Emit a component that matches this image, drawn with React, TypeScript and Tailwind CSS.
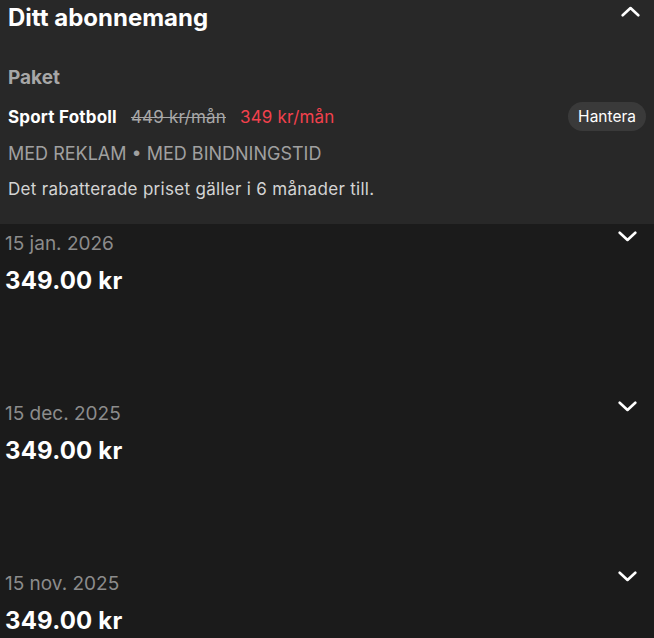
type Payment = {
    date: string
    amount: string
}

const payments: Payment[] = [
    { date: "15 jan. 2026", amount: "349.00 kr" },
    { date: "15 dec. 2025", amount: "349.00 kr" },
    { date: "15 nov. 2025", amount: "349.00 kr" },
]

function Chevron({ up = false }: { up?: boolean }) {
    return (
        <svg width="19" height="11" viewBox="0 0 19 11" fill="none" className={up ? "rotate-180" : ""}>
            <path d="M1.7 1.7 L9.5 9 L17.3 1.7" stroke="white" strokeWidth="2.6" strokeLinecap="round" strokeLinejoin="round" />
        </svg>
    )
}

function PaymentRow({ payment }: { payment: Payment }) {
    return (
        <div className="h-[170px] flex justify-between pl-[5px] pr-[17px] pt-[7px]">
            <div className="flex flex-col">
                <span className="text-[19px] leading-[26px] text-[#8c8c8c]">{payment.date}</span>
                <span className="text-[24px] leading-[32px] font-bold tracking-[0.2px] text-white mt-[8px]">{payment.amount}</span>
            </div>
            <div>
                <Chevron />
            </div>
        </div>
    )
}

export default function App() {
    return (
        <div className="w-[654px] h-[638px] overflow-hidden bg-[#1b1b1b] font-['Inter',sans-serif]">
            <div className="bg-[#282828] h-[224px] px-[8px] pt-[2px]">
                <div className="flex justify-between items-start">
                    <h1 className="text-[24px] leading-[32px] font-bold text-white">Ditt abonnemang</h1>
                    <div className="mt-[4px] mr-[6px]">
                        <Chevron up />
                    </div>
                </div>
                <div className="mt-[31px] text-[19px] leading-[26px] font-bold text-[#a7a7a7]">Paket</div>
                <div className="flex items-center justify-between mt-[11px]">
                    <div className="flex items-center gap-[14px] text-[17px] leading-[24px] tracking-[0.2px]">
                        <span className="font-bold text-white">Sport Fotboll</span>
                        <span className="line-through text-[#a7a7a7]">449 kr/mån</span>
                        <span className="text-[#f3414d]">349 kr/mån</span>
                    </div>
                    <button className="bg-[#3a3a3a] text-white text-[15.5px] rounded-full px-[10px] h-[29px]">Hantera</button>
                </div>
                <div className="mt-[10px] text-[18px] leading-[26px] text-[#a0a0a0]">MED REKLAM • MED BINDNINGSTID</div>
                <div className="mt-[10px] text-[17px] leading-[24px] tracking-[0.3px] text-[#d4d4d4]">Det rabatterade priset gäller i 6 månader till.</div>
            </div>
            {payments.map((p) => (
                <PaymentRow key={p.date} payment={p} />
            ))}
        </div>
    )
}
